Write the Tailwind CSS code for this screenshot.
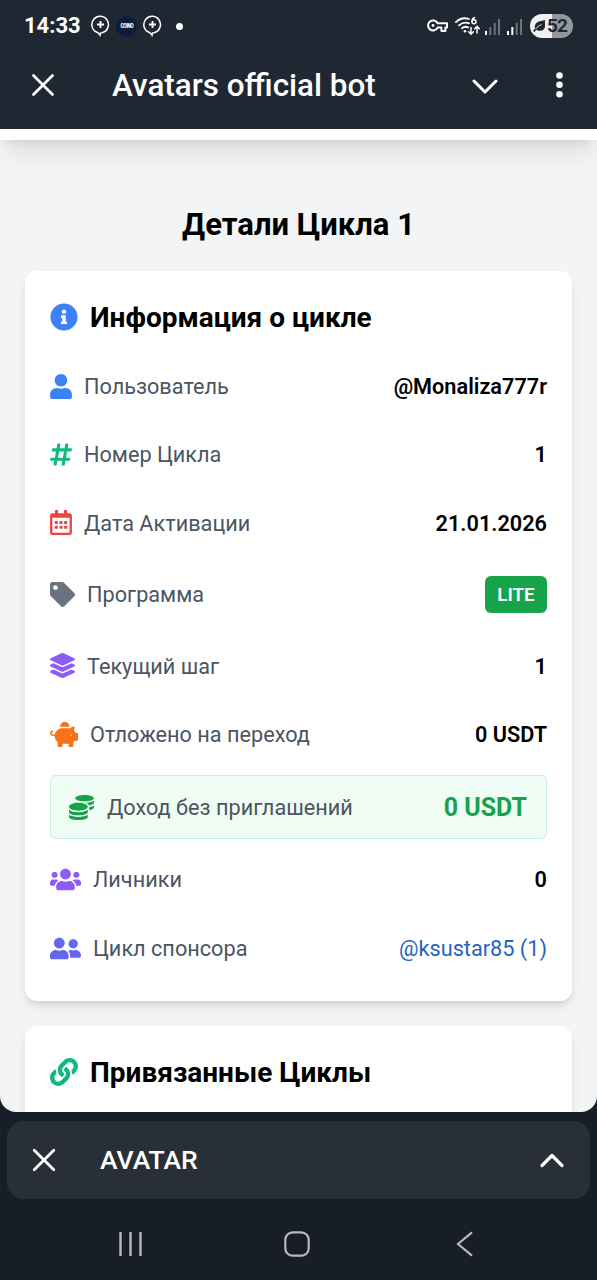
<!DOCTYPE html>
<html lang="ru">
<head>
<meta charset="utf-8">
<title>Avatars official bot</title>
<script src="https://cdn.jsdelivr.net/npm/@tailwindcss/browser@4"></script>
</head>
<body class="w-[597px] h-[1280px] overflow-hidden bg-[#171e27] font-[Roboto,sans-serif] flex flex-col">

<!-- Status bar -->
<header class="h-[129px] shrink-0 bg-[#1f2832] text-white flex flex-col">
  <div class="h-[52px] flex items-center pl-[24px] pr-[24px]">
    <span class="text-[22px] leading-[26px] font-bold w-[67px] whitespace-nowrap">14:33</span>
    <svg class="w-[19px] h-[22px]" viewBox="0 0 19 22" fill="none" stroke="white" stroke-width="1.5"><path d="M11 17.700A8.300 8.300 0 1 0 6 17.300c1.200.4 2.200 1.300 3 2.900l.6-2.300 1.400-.2z"/><path stroke-width="1.800" d="M9.500 6v7M6 9.500h7"/></svg>
    <span class="ml-[6px] w-[21px] h-[21px] rounded-full bg-[#0a1e3c] flex items-center justify-center"><span class="text-[7.500px] leading-[8px] font-black tracking-[-0.6px] scale-x-65">COINO</span></span>
    <svg class="ml-[6px] w-[19px] h-[22px]" viewBox="0 0 19 22" fill="none" stroke="white" stroke-width="1.5"><path d="M11 17.700A8.300 8.300 0 1 0 6 17.300c1.200.4 2.200 1.300 3 2.900l.6-2.300 1.400-.2z"/><path stroke-width="1.800" d="M9.500 6v7M6 9.500h7"/></svg>
    <span class="ml-[14px] w-[7px] h-[7px] rounded-full bg-white"></span>
    <div class="ml-auto flex items-center">
      <svg class="w-[21px] h-[14px]" viewBox="0 0 21 14" fill="none" stroke="white" stroke-width="2" stroke-linejoin="round"><path d="M10.6 4.3H20v4.2h-1.6V12h-4V8.6h-3.8A5 5 0 1 1 10.6 4.3z"/><circle cx="6" cy="6.5" r="1.4" fill="white" stroke="none"/></svg>
      <svg class="ml-[7px] w-[25px] h-[20px]" viewBox="0 0 25 20" fill="none" stroke="white" stroke-width="1.8" stroke-linecap="round"><path d="M1 6.2C4.5 2.7 9.500 1.5 14 3"/><path d="M4 9.3c3-2.700 6.500-3.300 10-2"/><path d="M6.900 12.200c1.800-1.500 4.200-1.800 6.200-.8"/><circle cx="10" cy="15.300" r="1.300" fill="white" stroke="none"/><path d="M19.500 1.500c-1.600.5-2.500 2-2.500 4" stroke-width="1.500"/><circle cx="19" cy="5.800" r="2" stroke-width="1.500"/><path d="M16 11.500v6.500m-2.300-2.200L16 18.200l2.300-2.400M22 17v-6.500m-2.300 2.300L22 10.300l2.300 2.500" stroke-width="1.500"/></svg>
      <svg class="ml-[4px] w-[17px] h-[17px]" viewBox="0 0 17 17"><path fill="white" d="M1 13h2v4H1z"/><path fill="#6c737b" d="M5.300 9h2v8h-2zM9.700 5h2v12h-2zM14 1h2v16h-2z"/></svg>
      <svg class="ml-[5px] w-[17px] h-[17px]" viewBox="0 0 17 17"><path fill="white" d="M1 13h2v4H1zM5.300 9h2v8h-2z"/><path fill="#6c737b" d="M9.700 5h2v12h-2zM14 1h2v16h-2z"/></svg>
      <span class="ml-[7px] w-[43px] h-[24px] rounded-full bg-linear-to-r from-[#eef0f2] from-52% to-[#94989d] to-52% flex items-center pl-[3px] text-[#1f2731]">
        <svg class="w-[12px] h-[12px]" viewBox="0 0 12 12"><path fill="currentColor" d="M12 0v6c0 3-2 4.800-5 4.800-1.500 0-2.700-.3-3.500-1L1.300 12 0 10.700l2-2C1 4 4 1.800 7 1.200z"/><path stroke="#eef0f2" fill="none" d="M2.500 9.200C4 7 6 5.500 8.500 4.500"/></svg>
        <span class="ml-[2px] text-[19px] leading-[24px] font-bold tracking-[-0.8px]">52</span>
      </span>
    </div>
  </div>
  <div class="h-[66px] flex items-center pl-[31px] pr-[37px]">
    <svg class="w-[24px] h-[24px]" viewBox="0 0 24 24" fill="none" stroke="white" stroke-width="2.700" stroke-linecap="round"><path d="M2.500 2.500l19 19M21.500 2.500l-19 19"/></svg>
    <h1 class="ml-[57px] pt-px text-[31.400px] leading-[36px] font-medium whitespace-nowrap">Avatars official bot</h1>
    <svg class="ml-auto w-[26px] h-[16px] mt-[3px]" viewBox="0 0 26 16" fill="none" stroke="white" stroke-width="3" stroke-linecap="round" stroke-linejoin="round"><path d="M2 2l11 11L24 2"/></svg>
    <svg class="ml-[58px] -mr-[3px] w-[7px] h-[26px]" viewBox="0 0 7 26" fill="white"><circle cx="3.500" cy="3.500" r="3.300"/><circle cx="3.500" cy="12.800" r="3.300"/><circle cx="3.500" cy="22.200" r="3.300"/></svg>
  </div>
</header>

<!-- Web view -->
<main class="h-[983px] shrink-0 bg-[#f3f4f6] rounded-b-[16px] overflow-hidden flex flex-col">
  <div class="-mt-[60px] h-[71px] shrink-0 bg-white shadow-[0_15.5px_23px_-4.7px_rgba(0,0,0,0.1),0_6px_9px_-6px_rgba(0,0,0,0.1)]"></div>
  <h2 class="mt-[65px] text-center text-[31px] leading-[40px] font-bold text-black">Детали Цикла 1</h2>

  <section class="mx-[25px] mt-[26px] h-[730px] shrink-0 rounded-[12px] bg-white shadow-[0_6.2px_9.3px_-1.6px_rgba(0,0,0,0.1),0_3.1px_6.2px_-3.1px_rgba(0,0,0,0.1)] px-[25px] pt-[25px] text-[21.700px] text-[#4b5563] [&_span]:pt-[2px] [&_b]:pt-[2px] [&_a]:pt-[2px]">
    <h3 class="h-[42px] flex items-center gap-[12px] text-[28px] font-bold text-black mb-[14px]">
      <svg class="w-[28px] h-[28px] fill-[#3b82f6]" viewBox="0 0 512 512"><path d="M256 8C119.043 8 8 119.083 8 256c0 136.997 111.043 248 248 248s248-111.003 248-248C504 119.083 392.957 8 256 8zm0 110c23.196 0 42 18.804 42 42s-18.804 42-42 42-42-18.804-42-42 18.804-42 42-42zm56 254c0 6.627-5.373 12-12 12h-88c-6.627 0-12-5.373-12-12v-24c0-6.627 5.373-12 12-12h12v-64h-12c-6.627 0-12-5.373-12-12v-24c0-6.627 5.373-12 12-12h64c6.627 0 12 5.373 12 12v100h12c6.627 0 12 5.373 12 12v24z"/></svg>
      <span>Информация о цикле</span>
    </h3>
    <div class="h-[68.400px] flex items-center">
      <svg class="w-[22px] h-[25px] mr-[12px] fill-[#3b82f6]" viewBox="0 0 448 512"><path d="M224 256c70.7 0 128-57.3 128-128S294.7 0 224 0 96 57.3 96 128s57.3 128 128 128zm89.6 32h-16.7c-22.2 10.2-46.9 16-72.9 16s-50.6-5.8-72.9-16h-16.7C60.2 288 0 348.2 0 422.4V464c0 26.5 21.5 48 48 48h352c26.5 0 48-21.5 48-48v-41.6c0-74.2-60.2-134.4-134.4-134.4z"/></svg>
      <span>Пользователь</span><b class="ml-auto font-semibold text-black">@Monaliza777r</b>
    </div>
    <div class="h-[68.400px] flex items-center">
      <svg class="w-[22px] h-[25px] mr-[12px] fill-[#10b981]" viewBox="0 0 448 512"><path d="M440.667 182.109l7.143-40c1.313-7.355-4.342-14.109-11.813-14.109h-74.81l14.623-81.891C377.123 38.754 371.468 32 363.997 32h-40.632a12 12 0 0 0-11.813 9.891L296.175 128H197.54l14.623-81.891C213.477 38.754 207.822 32 200.35 32h-40.632a12 12 0 0 0-11.813 9.891L132.528 128H53.432a12 12 0 0 0-11.813 9.891l-7.143 40C33.163 185.246 38.818 192 46.289 192h74.81L98.242 320H19.146a12 12 0 0 0-11.813 9.891l-7.143 40C-1.123 377.246 4.532 384 12.003 384h74.81L72.19 465.891C70.877 473.246 76.532 480 84.003 480h40.632a12 12 0 0 0 11.813-9.891L151.826 384h98.634l-14.623 81.891C234.523 473.246 240.178 480 247.65 480h40.632a12 12 0 0 0 11.813-9.891L315.472 384h79.096a12 12 0 0 0 11.813-9.891l7.143-40c1.313-7.355-4.342-14.109-11.813-14.109h-74.81l22.857-128h79.096a12 12 0 0 0 11.813-9.891zM261.889 320h-98.634l22.857-128h98.634l-22.857 128z"/></svg>
      <span>Номер Цикла</span><b class="ml-auto font-semibold text-black">1</b>
    </div>
    <div class="h-[68.400px] flex items-center">
      <svg class="w-[22px] h-[25px] mr-[12px] fill-[#ef4444]" viewBox="0 0 448 512"><path fill-rule="evenodd" d="M48 64h52V12q0-12 12-12h40q12 0 12 12v52h120V12q0-12 12-12h40q12 0 12 12v52h52q48 0 48 48v352q0 48-48 48H48q-48 0-48-48V112q0-48 48-48zM48 160v298q0 6 6 6h340q6 0 6-6V160z"/><path d="M108 224h40q12 0 12 12v40q0 12-12 12h-40q-12 0-12-12v-40q0-12 12-12zM204 224h40q12 0 12 12v40q0 12-12 12h-40q-12 0-12-12v-40q0-12 12-12zM300 224h40q12 0 12 12v40q0 12-12 12h-40q-12 0-12-12v-40q0-12 12-12zM108 320h40q12 0 12 12v40q0 12-12 12h-40q-12 0-12-12v-40q0-12 12-12zM204 320h40q12 0 12 12v40q0 12-12 12h-40q-12 0-12-12v-40q0-12 12-12zM300 320h40q12 0 12 12v40q0 12-12 12h-40q-12 0-12-12v-40q0-12 12-12z"/></svg>
      <span>Дата Активации</span><b class="ml-auto font-semibold text-black">21.01.2026</b>
    </div>
    <div class="h-[74.600px] flex items-center">
      <svg class="w-[25px] h-[25px] mr-[12px] fill-[#6b7280]" viewBox="0 0 512 512"><path d="M0 252.118V48C0 21.49 21.49 0 48 0h204.118a48 48 0 0 1 33.941 14.059l211.883 211.883c18.745 18.745 18.745 49.137 0 67.882L293.823 497.941c-18.745 18.745-49.137 18.745-67.882 0L14.059 286.059A48 48 0 0 1 0 252.118zM112 64c-26.51 0-48 21.49-48 48s21.49 48 48 48 48-21.49 48-48-21.49-48-48-48z"/></svg>
      <span>Программа</span><b class="ml-auto h-[37px] rounded-[6px] bg-[#16a34a] px-[12.400px] flex items-center text-[18.700px] font-semibold text-white">LITE</b>
    </div>
    <div class="h-[68.400px] flex items-center">
      <svg class="w-[25px] h-[25px] mr-[12px] fill-[#8b5cf6]" viewBox="0 0 512 512"><path d="M12.41 148.02l232.94 105.67c6.8 3.09 14.49 3.09 21.29 0l232.94-105.67c16.55-7.51 16.55-32.52 0-40.03L266.65 2.31a25.607 25.607 0 0 0-21.29 0L12.41 107.98c-16.55 7.51-16.55 32.53 0 40.04zm487.18 88.28l-58.09-26.33-161.64 73.27c-7.56 3.43-15.59 5.17-23.86 5.17s-16.29-1.74-23.86-5.17L70.51 209.97l-58.1 26.33c-16.55 7.5-16.55 32.5 0 40l232.94 105.59c6.8 3.08 14.49 3.08 21.29 0L499.59 276.3c16.55-7.5 16.55-32.5 0-40zm0 127.8l-57.87-26.23-161.86 73.37c-7.56 3.43-15.59 5.17-23.86 5.17s-16.29-1.74-23.86-5.17L70.29 337.87 12.41 364.1c-16.55 7.5-16.55 32.5 0 40l232.94 105.59c6.8 3.08 14.49 3.08 21.29 0L499.59 404.1c16.55-7.5 16.55-32.5 0-40z"/></svg>
      <span>Текущий шаг</span><b class="ml-auto font-semibold text-black">1</b>
    </div>
    <div class="h-[68.400px] flex items-center">
      <svg class="w-[28px] h-[25px] mr-[12px] fill-[#f97316]" viewBox="0 0 576 512"><path d="M560 224h-29.5c-8.8-20-21.6-37.7-37.4-52.5L512 96h-32c-29.4 0-55.4 13.5-73 34.3-7.6-1.1-15.1-2.3-23-2.3H256c-77.4 0-141.9 55-156.8 128H56c-14.8 0-26.5-13.5-23.5-28.8C34.7 215.8 45.4 208 57 208h1c3.3 0 6-2.7 6-6v-20c0-3.3-2.7-6-6-6-28.5 0-53.9 20.4-57.5 48.6C-3.9 258.8 22.7 288 56 288h40c0 52.2 25.4 98.1 64 127.3V496c0 8.8 7.2 16 16 16h64c8.8 0 16-7.2 16-16v-48h128v48c0 8.8 7.2 16 16 16h64c8.8 0 16-7.2 16-16v-80.7c11.8-8.9 22.3-19.4 31.3-31.3H560c8.8 0 16-7.2 16-16V240c0-8.8-7.2-16-16-16zm-128 64c-8.8 0-16-7.2-16-16s7.2-16 16-16 16 7.2 16 16-7.2 16-16 16zM256 96h128c5.4 0 10.7.4 15.9.8 0-.3.1-.5.1-.8 0-53-43-96-96-96s-96 43-96 96c0 2.1.5 4.1.6 6.2 15.2-3.9 31-6.2 47.4-6.2z"/></svg>
      <span>Отложено на переход</span><b class="ml-auto font-semibold text-black">0 USDT</b>
    </div>
    <div class="my-[6.300px] h-[64.400px] flex items-center rounded-[6px] border-[1.500px] border-[#c5eedb] bg-[#effdf4] pl-[18px] pr-[19px]">
      <svg class="w-[25px] h-[25px] mr-[13px] fill-[#16a34a]" viewBox="0 0 512 512"><path d="M0 405.3V448c0 35.3 86 64 192 64s192-28.7 192-64v-42.7C342.7 434.4 267.2 448 192 448S41.3 434.4 0 405.3zM320 128c106 0 192-28.7 192-64S426 0 320 0 128 28.7 128 64s86 64 192 64zM0 300.4V352c0 35.3 86 64 192 64s192-28.7 192-64v-51.6c-41.3 34-116.9 51.6-192 51.6S41.3 334.4 0 300.4zm416 11c57.3-11.1 96-31.7 96-55.4v-42.7c-23.2 16.4-57.3 27.6-96 34.5v63.6zM192 160C86 160 0 195.8 0 240s86 80 192 80 192-35.8 192-80-86-80-192-80zm219.3 56.3c60-10.8 100.7-32 100.7-56.3v-42.7c-35.5 25.1-96.5 38.6-160.7 41.8 29.5 14.3 51.2 33.5 60 57.2z"/></svg>
      <span>Доход без приглашений</span><b class="ml-auto text-[25px] font-bold text-[#16a34a]">0 USDT</b>
    </div>
    <div class="h-[68.400px] flex items-center">
      <svg class="w-[31px] h-[25px] mr-[12px] fill-[#8b5cf6]" viewBox="0 0 640 512"><path d="M96 224c35.3 0 64-28.7 64-64s-28.7-64-64-64-64 28.7-64 64 28.7 64 64 64zm448 0c35.3 0 64-28.7 64-64s-28.7-64-64-64-64 28.7-64 64 28.7 64 64 64zm32 32h-64c-17.6 0-33.5 7.1-45.1 18.6 40.3 22.1 68.9 62 75.1 109.4h66c17.7 0 32-14.3 32-32v-32c0-35.3-28.7-64-64-64zm-256 0c61.9 0 112-50.1 112-112S381.9 32 320 32 208 82.1 208 144s50.1 112 112 112zm76.8 32h-8.3c-20.8 10-43.9 16-68.5 16s-47.6-6-68.500-16h-8.3C179.6 288 128 339.6 128 403.2V432c0 26.5 21.5 48 48 48h288c26.5 0 48-21.5 48-48v-28.8c0-63.6-51.6-115.2-115.2-115.2zm-223.7-13.4C161.5 263.1 145.6 256 128 256H64c-35.3 0-64 28.7-64 64v32c0 17.7 14.3 32 32 32h65.9c6.3-47.4 34.9-87.3 75.2-109.4z"/></svg>
      <span>Личники</span><b class="ml-auto font-semibold text-black">0</b>
    </div>
    <div class="h-[68.400px] flex items-center">
      <svg class="w-[31px] h-[25px] mr-[12px] fill-[#6366f1]" viewBox="0 0 640 512"><path d="M192 256c61.9 0 112-50.1 112-112S253.9 32 192 32 80 82.1 80 144s50.1 112 112 112zm76.8 32h-8.3c-20.8 10-43.9 16-68.5 16s-47.6-6-68.5-16h-8.3C51.6 288 0 339.6 0 403.2V432c0 26.5 21.5 48 48 48h288c26.5 0 48-21.5 48-48v-28.8c0-63.6-51.6-115.2-115.2-115.2zM480 256c53 0 96-43 96-96s-43-96-96-96-96 43-96 96 43 96 96 96zm48 32h-3.8c-13.9 4.8-28.6 8-44.2 8s-30.3-3.2-44.2-8H432c-20.4 0-39.2 5.9-55.7 15.4 24.4 26.3 39.7 61.2 39.7 99.8v38.4c0 2.2-.5 4.3-.6 6.400H592c26.5 0 48-21.5 48-48 0-61.9-50.1-112-112-112z"/></svg>
      <span>Цикл спонсора</span><a class="ml-auto text-[#2563bf]">@ksustar85 (1)</a>
    </div>
  </section>

  <section class="mx-[25px] mt-[25px] h-[140px] shrink-0 rounded-t-[12px] bg-white shadow-[0_6.2px_9.3px_-1.6px_rgba(0,0,0,0.1),0_3.1px_6.2px_-3.1px_rgba(0,0,0,0.1)] px-[25px] pt-[25px]">
    <h3 class="h-[42px] flex items-center gap-[12px] text-[28px] font-bold text-black">
      <svg class="w-[28px] h-[28px] fill-[#10b981]" viewBox="0 0 512 512"><path d="M326.612 185.391c59.747 59.809 58.927 155.698.36 214.59-.11.12-.24.25-.36.37l-67.2 67.2c-59.27 59.27-155.699 59.262-214.96 0-59.27-59.26-59.27-155.7 0-214.96l37.106-37.106c9.84-9.84 26.786-3.3 27.294 10.606.648 17.722 3.826 35.527 9.69 52.721 1.986 5.822.567 12.262-3.783 16.612l-13.087 13.087c-28.026 28.026-28.905 73.66-1.155 101.96 28.024 28.579 74.086 28.749 102.325.51l67.2-67.19c28.191-28.191 28.073-73.757 0-101.83-3.701-3.694-7.429-6.564-10.341-8.569a16.037 16.037 0 0 1-6.947-12.606c-.396-10.567 3.348-21.456 11.698-29.806l21.054-21.055c5.521-5.521 14.182-6.199 20.584-1.731a152.482 152.482 0 0 1 20.522 17.197zM467.547 44.449c-59.261-59.262-155.69-59.27-214.96 0l-67.2 67.2c-.12.12-.25.25-.36.37-58.566 58.892-59.387 154.781.36 214.59a152.454 152.454 0 0 0 20.521 17.196c6.402 4.468 15.064 3.789 20.584-1.731l21.054-21.055c8.35-8.35 12.094-19.239 11.698-29.806a16.037 16.037 0 0 0-6.947-12.606c-2.912-2.005-6.64-4.875-10.341-8.569-28.073-28.073-28.191-73.639 0-101.83l67.2-67.19c28.239-28.239 74.3-28.069 102.325.51 27.75 28.3 26.872 73.934-1.155 101.96l-13.087 13.087c-4.35 4.35-5.769 10.79-3.783 16.612 5.864 17.194 9.042 34.999 9.69 52.721.509 13.906 17.454 20.446 27.294 10.606l37.106-37.106c59.271-59.259 59.271-155.699.001-214.959z"/></svg>
      <span class="pt-[2px]">Привязанные Циклы</span>
    </h3>
  </section>
</main>

<!-- Minimised tab -->
<div class="mx-[7px] mt-[9px] h-[78px] shrink-0 rounded-[16px] bg-[#292f36] text-white flex items-center pl-[25px] pr-[25px]">
  <svg class="w-[24px] h-[24px]" viewBox="0 0 24 24" fill="none" stroke="white" stroke-width="2.800" stroke-linecap="round"><path d="M2.200 2.200l19.600 19.600M21.800 2.200L2.200 21.800"/></svg>
  <span class="ml-[44px] text-[26.500px] font-medium">AVATAR</span>
  <svg class="ml-auto w-[26px] h-[15px]" viewBox="0 0 26 15" fill="none" stroke="white" stroke-width="3.200" stroke-linecap="round" stroke-linejoin="round"><path d="M3 12.500L13 2.500l10 10"/></svg>
</div>

<!-- System navigation -->
<nav class="h-[81px] shrink-0 flex items-center pt-[9px] pl-[118px]">
  <svg class="w-[25px] h-[24px]" viewBox="0 0 25 24" fill="none" stroke="#b6babf" stroke-width="2.400"><path d="M2.500 0v24M12.500 0v24M22.500 0v24"/></svg>
  <svg class="ml-[141px] w-[26px] h-[26px]" viewBox="0 0 26 26" fill="none" stroke="#b6babf" stroke-width="2.200"><rect x="1.300" y="1.300" width="23.400" height="23.400" rx="7.500"/></svg>
  <svg class="ml-[146px] w-[18px] h-[26px]" viewBox="0 0 18 26" fill="none" stroke="#b6babf" stroke-width="2.200"><path d="M16 1.300L2 13l14 11.700"/></svg>
</nav>
</body>
</html>
